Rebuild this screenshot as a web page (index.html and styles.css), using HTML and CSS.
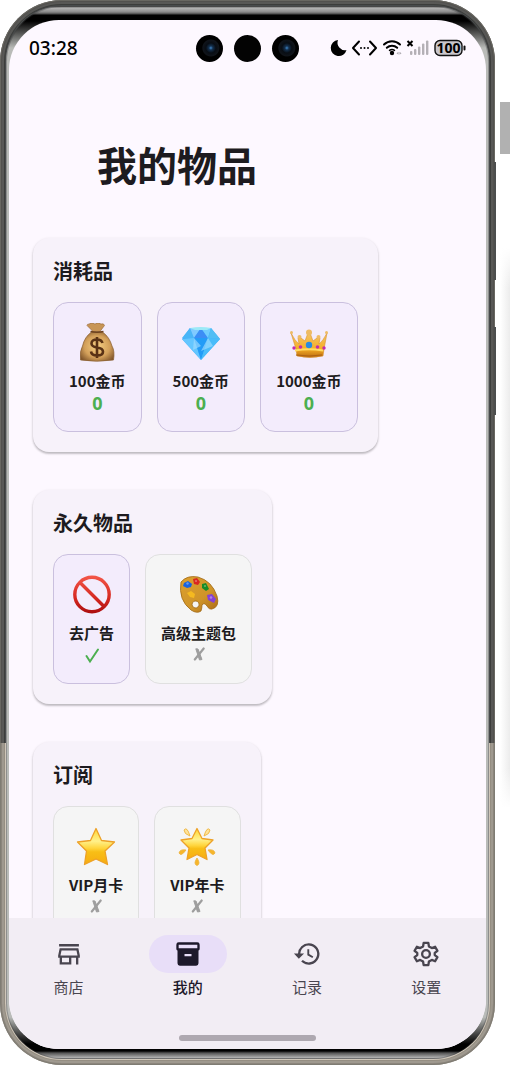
FILE: index.html
```html
<!DOCTYPE html>
<html lang="zh-CN">
<head>
<meta charset="utf-8">
<meta name="viewport" content="width=device-width, initial-scale=1">
<title>我的物品</title>
<link rel="stylesheet" href="styles.css">
</head>
<body>
<div class="stage">
  <div class="phone">
    <span class="key key-power"></span>
    <span class="key key-volume"></span>
    <div class="bezel">
      <div class="screen">
        <header class="status">
          <time class="clock">03:28</time>
          <div class="cameras">
            <span class="camera lens"></span><span class="camera"></span><span class="camera lens"></span>
          </div>
          <svg class="indicators" viewBox="0 0 136 20" aria-hidden="true">
            <path d="M8 2A8 8 0 1 0 16.500 12A7.500 7.500 0 0 1 8 2Z" fill="#000"/>
            <g fill="none" stroke="#000" stroke-width="2" stroke-linecap="round" stroke-linejoin="round"><path d="M29 3.500l-6 6.500 6 6.500M40 3.500l6 6.500-6 6.500"/></g>
            <g fill="#000"><circle cx="31" cy="10" r="1"/><circle cx="34.500" cy="10" r="1"/><circle cx="38" cy="10" r="1"/><circle cx="62" cy="15" r="2.200"/></g>
            <g fill="none" stroke="#000" stroke-width="2" stroke-linecap="round"><path d="M54 6.500a11.500 11.500 0 0 1 16 0M56.800 9.800a7.500 7.500 0 0 1 10.400 0"/><path d="M59.500 12.400a4 4 0 0 1 5 0" stroke-width="1.500"/></g>
            <path d="M66.500 15.300l2-1.500v3zM71.500 15.300l-2-1.500v3z" fill="#aaa6ac"/>
            <path d="M77.500 3l5 5M82.500 3l-5 5" stroke="#000" stroke-width="2"/>
            <g fill="#b4b0b6"><rect x="80" y="13" width="2.400" height="4" rx="1"/><rect x="84" y="11" width="2.400" height="6" rx="1"/><rect x="88" y="8.500" width="2.400" height="8.500" rx="1"/><rect x="92" y="5.500" width="2.400" height="11.500" rx="1"/><rect x="96" y="2.500" width="2.400" height="14.500" rx="1"/></g>
            <rect x="105" y="2.500" width="27" height="15" rx="5" fill="#c9c6cb" stroke="#111" stroke-width="1.400"/>
            <rect x="133.500" y="7.500" width="2" height="5" rx="1" fill="#111"/>
            <text x="118.500" y="15" text-anchor="middle" class="battery-text">100</text>
          </svg>
        </header>

        <main class="content">
          <h1 class="title">我的物品</h1>

          <section class="card">
            <h2 class="card-title">消耗品</h2>
            <ul class="items">
              <li class="item owned">
                <svg class="art" viewBox="0 0 40 40" aria-hidden="true">
                  <defs><radialGradient id="bag" cx=".5" cy=".5" r=".62"><stop offset="0" stop-color="#f6cf84"/><stop offset=".6" stop-color="#d3a05a"/><stop offset="1" stop-color="#80552a"/></radialGradient></defs>
                  <path d="M12 1q3-2 6 0 3-2.500 6 0 3-1 3.500 1.500l-4.500 6h-7q-3-3-6-6 0-1.500 2-1.500z" fill="#c89555" stroke="#946637" stroke-width=".6"/>
                  <path d="M14.500 9h11q7 5 9.500 14 3 5 1.500 14-17 2.500-33 0-1-9 2-14 2-9 9-14z" fill="url(#bag)" stroke="#8b6032" stroke-width=".7"/>
                  <path d="M13.500 8.500q6.500 1.600 13 0" stroke="#6d421e" stroke-width="1.500" fill="none"/>
                  <path d="M25.500 20q-1-3.500-5.500-3.500-5.500 0-5.500 4 0 3 5.500 4 6 .8 6 4.200 0 3.800-6 3.800-5.500 0-6-4M20 14v21" fill="none" stroke="#593215" stroke-width="2.600"/>
                </svg>
                <span class="name">100金币</span><strong class="count">0</strong>
              </li>
              <li class="item owned">
                <svg class="art" viewBox="0 0 40 40" aria-hidden="true">
                  <path d="M9 5h21l9 11-19 21L1 16z" fill="#42aefa"/>
                  <path d="M9 5l4 10H1z" fill="#49b5f7"/><path d="M9 5h11l-7 10z" fill="#80caff"/><path d="M20 5l7 10H13z" fill="#3c8df5"/><path d="M20 5h10l-3 10z" fill="#70cdff"/><path d="M30 5l9 11-12-1z" fill="#51bdf4"/>
                  <path d="M1 16l12-1 7 22z" fill="#64c6ff"/><path d="M13 15h14l-7 22z" fill="#239cf7"/><path d="M27 15l12 1-19 21z" fill="#49bcfa"/>
                  <path d="M13 15l7 8-8 4zM27 15l5 8-12 5z" fill="#9fdcff" opacity=".65"/><path d="M9 5q11-2 21 0l-4 2H14z" fill="#9ce9f7"/>
                </svg>
                <span class="name">500金币</span><strong class="count">0</strong>
              </li>
              <li class="item owned">
                <svg class="art" viewBox="0 0 40 40" aria-hidden="true">
                  <defs><linearGradient id="gold" x2="0" y2="1"><stop stop-color="#f3c468"/><stop offset=".65" stop-color="#f5ae25"/><stop offset="1" stop-color="#bc6c12"/></linearGradient></defs>
                  <path d="M2 10q4 8 8 11l-1-6h3l4 3 3-8h2l3 8 4-3h3l-1 6q4-3 8-11l-3 16-1 7q-13 3-26 0l-1-7z" fill="url(#gold)" stroke="#d9902b" stroke-width=".6"/>
                  <g fill="#eebb65"><circle cx="20" cy="9.500" r="3"/><circle cx="10.500" cy="14" r="2"/><circle cx="29.500" cy="14" r="2"/><circle cx="2.500" cy="9.500" r="1.500"/><circle cx="37.500" cy="9.500" r="1.500"/></g>
                  <path d="M6 27.500q14-2.500 28 0" stroke="#ffdb64" stroke-width="2" fill="none"/><path d="M7 32q13 2 26 0" stroke="#ae6212" stroke-width="1" fill="none"/>
                  <circle cx="20" cy="22" r="3.200" fill="#278be1"/><g fill="#c32cab"><circle cx="11.500" cy="24" r="1.800"/><circle cx="28.500" cy="24" r="1.800"/><circle cx="5" cy="25" r="1.700"/><circle cx="35" cy="25" r="1.700"/></g>
                </svg>
                <span class="name">1000金币</span><strong class="count">0</strong>
              </li>
            </ul>
          </section>

          <section class="card">
            <h2 class="card-title">永久物品</h2>
            <ul class="items">
              <li class="item owned">
                <svg class="art" viewBox="0 0 40 40" aria-hidden="true">
                  <defs><linearGradient id="ban" gradientUnits="userSpaceOnUse" x1="0" y1="0" x2="0" y2="39"><stop stop-color="#f4584a"/><stop offset=".6" stop-color="#d52820"/><stop offset="1" stop-color="#a90d0f"/></linearGradient></defs>
                  <g fill="none" stroke="url(#ban)" stroke-width="3.400"><circle cx="20" cy="19.500" r="17.200"/><path d="M8 7.500l24 24"/></g>
                </svg>
                <span class="name">去广告</span>
                <svg class="mark yes" viewBox="0 0 22 22" role="img" aria-label="已拥有"><path d="M5.500 12l3.500 5.500L17 5.500" fill="none" stroke="currentColor" stroke-width="2" stroke-linecap="round"/></svg>
              </li>
              <li class="item">
                <svg class="art" viewBox="0 0 40 40" aria-hidden="true">
                  <defs><linearGradient id="wood" x2="1" y2="1"><stop stop-color="#dda02e"/><stop offset=".6" stop-color="#cf9429"/><stop offset="1" stop-color="#aa6915"/></linearGradient></defs>
                  <path fill-rule="evenodd" d="M2 7Q8 0 19 2q14 4 19 19 3 11-5 13-3 1-5-3-3-4-5-1 0 3-1 6-4 3-10-1Q-1 25 2 7zm14 19a3.500 3.500 0 1 0 3 6 3.500 3.500 0 0 0-3-6z" fill="url(#wood)" stroke="#9f6713" stroke-width=".8"/>
                  <path d="M5 8l4-2 4 3-1 3-4 1-4-2z" fill="#1763e0"/><path d="M14 4l4-1 3 4-2 3-4-1z" fill="#d92820"/><path d="M23 9l4-1 3 6-3 2-4-3z" fill="#178c27"/><path d="M8 18l4-2 4 3-1 4-4-1z" fill="#f4b920"/><path d="M28 20l5-1 4 5-2 4-6-3z" fill="#8541d5"/>
                  <g fill="#fff" opacity=".35"><circle cx="8.500" cy="8.500" r="1.200"/><circle cx="17" cy="6" r="1"/><circle cx="26" cy="11" r="1"/><circle cx="32" cy="22.500" r="1.300"/></g>
                </svg>
                <span class="name">高级主题包</span>
                <svg class="mark no" viewBox="0 0 22 22" role="img" aria-label="未拥有"><path d="M15.700 4.500L6.800 15.500" fill="none" stroke="currentColor" stroke-width="2.200" stroke-linecap="round"/><path d="M7.800 4.800l2.200.2 4 10.500-2.500.5z" fill="currentColor" stroke="currentColor" stroke-linejoin="round"/></svg>
              </li>
            </ul>
          </section>

          <section class="card">
            <h2 class="card-title">订阅</h2>
            <ul class="items">
              <li class="item">
                <svg class="art" viewBox="0 0 40 40" aria-hidden="true">
                  <defs><linearGradient id="star" x2="0" y2="1"><stop stop-color="#ffd62e"/><stop offset=".35" stop-color="#fff18b"/><stop offset=".55" stop-color="#ffd53c"/><stop offset=".65" stop-color="#f8be16"/><stop offset="1" stop-color="#f7ac10"/></linearGradient></defs>
                  <path d="M20 1.500l5.500 12 13 1.500-9.500 9 2.500 13.500L20 32 8.500 37.500l2-13.500L1.500 15l13-1.500z" fill="url(#star)" stroke="#eda127" stroke-width="1.300" stroke-linejoin="round"/>
                </svg>
                <span class="name">VIP月卡</span>
                <svg class="mark no" viewBox="0 0 22 22" role="img" aria-label="未拥有"><path d="M15.700 4.500L6.800 15.500" fill="none" stroke="currentColor" stroke-width="2.200" stroke-linecap="round"/><path d="M7.800 4.800l2.200.2 4 10.500-2.500.5z" fill="currentColor" stroke="currentColor" stroke-linejoin="round"/></svg>
              </li>
              <li class="item">
                <svg class="art" viewBox="0 0 40 40" aria-hidden="true">
                  <path d="M20 1.500l5 10 11 1.500-8 8 2 11.500-10-5-10 5 2-11.500L4 13l11-1.500z" fill="url(#star)" stroke="#eda127" stroke-width="1.300" stroke-linejoin="round"/>
                  <g stroke="#edb443" stroke-width=".9"><path d="M13 9Q7 7 7 3q3-4 6 6zM27 9q6-2 6-6-3-4-6 6z" fill="#ffe398"/><path d="M9 23q-6-1-7 3 2 4 7-3zM31 23q6-1 7 3-2 4-7-3zM20 31q-4 6 0 7.500 4-1.500 0-7.500z" fill="#f7b629"/></g>
                </svg>
                <span class="name">VIP年卡</span>
                <svg class="mark no" viewBox="0 0 22 22" role="img" aria-label="未拥有"><path d="M15.700 4.500L6.800 15.500" fill="none" stroke="currentColor" stroke-width="2.200" stroke-linecap="round"/><path d="M7.800 4.800l2.200.2 4 10.500-2.500.5z" fill="currentColor" stroke="currentColor" stroke-linejoin="round"/></svg>
              </li>
            </ul>
          </section>
        </main>

        <footer class="dock">
          <nav class="tabs">
            <button class="tab" type="button"><span class="pill"><svg class="tab-icon" viewBox="0 0 24 24" aria-hidden="true"><path d="M3.500 3.500h17v2h-17zM4 7h16l1.300 6.200v2H20V21h-2v-5.800h-4V21H4v-5.800H2.700v-2zM5.600 9l-.9 4.200h14.600L18.400 9zM6 15.200V19h6v-3.800z" fill="currentColor" fill-rule="evenodd"/></svg></span>商店</button>
            <button class="tab active" type="button" aria-current="page"><span class="pill"><svg class="tab-icon" viewBox="0 0 24 24" aria-hidden="true"><path d="M4 2h16a2 2 0 0 1 2 2v3.500q0 1.200-1 1.500v11a2 2 0 0 1-2 2H5a2 2 0 0 1-2-2V9Q2 8.700 2 7.500V4a2 2 0 0 1 2-2zm0 2v3h16V4zm5 8v2h6v-2z" fill="currentColor" fill-rule="evenodd"/></svg></span>我的</button>
            <button class="tab" type="button"><span class="pill"><svg class="tab-icon" viewBox="0 0 24 24" aria-hidden="true"><path d="M13.500 2.800a9.200 9.200 0 0 0-9.200 8.700H.8L5 16l4.500-4.500H6.300A7.200 7.200 0 1 1 8.400 17.100L7 18.500A9.200 9.200 0 1 0 13.500 2.800zM12.300 8v5l4.300 2.500.8-1.300-3.500-2.100V8z" fill="currentColor"/></svg></span>记录</button>
            <button class="tab" type="button"><span class="pill"><svg class="tab-icon" viewBox="0 0 24 24" aria-hidden="true"><path d="M10 2.500h4l.5 3 2.500 1.400 2.800-1.100 2 3.500-2.300 1.800v1.800l2.300 1.800-2 3.500-2.800-1.100-2.500 1.400-.5 3h-4l-.5-3L7 17.100l-2.800 1.100-2-3.500 2.300-1.800v-1.800L2.200 9.300l2-3.500L7 6.900l2.500-1.400z" fill="none" stroke="currentColor" stroke-width="2" stroke-linejoin="round"/><circle cx="12" cy="12" r="3.300" fill="none" stroke="currentColor" stroke-width="2"/></svg></span>设置</button>
          </nav>
          <span class="home-bar"></span>
        </footer>
      </div>
    </div>
  </div>
  <div class="gutter"><span class="thumb"></span><span class="edge-shadow"></span></div>
</div>
</body>
</html>
```
FILE: styles.css
```css
* { box-sizing: border-box; }
body {
  margin: 0;
  background: #fff;
  color: #1d1b20;
  font-family: "Noto Sans CJK SC", sans-serif;
}
h1, h2, ul { margin: 0; padding: 0; }
ul { list-style: none; }

.stage { display: flex; height: 100vh; }

.phone {
  position: relative;
  flex: 1;
  min-width: 0;
  padding: 6px;
  border-radius: 62px;
  background: linear-gradient(#484b4c 0 69.8%, #cfc6b9 69.8%);
  box-shadow: inset 0 0 0 1px rgba(120, 118, 110, .6), inset 0 0 0 2px rgba(60, 55, 50, .2),
    inset 0 0 0 4px rgba(200, 200, 195, .2), inset 0 0 0 5px rgba(40, 36, 30, .35);
}
.key {
  position: absolute;
  right: -1px;
  width: 2px;
  background: #4c4e4e;
}
.key-power { top: 162px; height: 118px; }
.key-volume { top: 327px; height: 88px; }

.bezel {
  height: 100%;
  padding: 14px 3px 10px;
  border-radius: 56px;
  background: linear-gradient(#2b2b2b 0, #b5b5b5 2px, #8a8a8a 6px, #4a4a4a 8px, #000 9px, #000 15px,
    #b9bbb8 42px, #b9bbb8 calc(100% - 42px), #000 calc(100% - 15px), #000 calc(100% - 8px),
    #555 calc(100% - 6px), #b5b5b5 calc(100% - 1px), #666 100%);
  box-shadow: inset 0 0 0 1px rgba(60, 60, 60, .35);
}
.screen {
  display: flex;
  flex-direction: column;
  height: 100%;
  overflow: hidden;
  border-radius: 50px;
  background: #fdf8ff;
}

.status {
  display: grid;
  grid-template-columns: 1fr auto 1fr;
  align-items: center;
  flex: none;
  height: 56px;
  padding: 0 20px;
}
.clock { color: #000; font: 500 19px/24px "Noto Sans", sans-serif; }
.cameras { display: flex; gap: 11px; }
.camera { width: 27px; height: 27px; border-radius: 50%; background: #030303; }
.lens { background: radial-gradient(circle at 55% 48%, #3f86c8 0, #14304e 2px, #080d14 5px, #10141a 8px, #000 9px); }
.indicators { justify-self: end; width: 136px; height: 20px; }
.battery-text { font: 700 14px "Noto Sans", sans-serif; }

.content {
  display: flex;
  flex-direction: column;
  align-items: flex-start;
  flex: 1;
  gap: 38px;
  min-height: 0;
  padding: 59px 24px 24px;
  overflow-y: auto;
  scrollbar-width: none;
}
.title { margin-bottom: 7px; padding-left: 64px; font-size: 40px; font-weight: 700; line-height: 58px; }

.card {
  flex: none;
  padding: 20px;
  border-radius: 16px;
  background: #f7f2fa;
  box-shadow: 0 1px 3px rgba(0, 0, 0, .15), 0 2px 2px rgba(0, 0, 0, .16);
}
.card-title { margin-bottom: 18px; font-size: 20px; font-weight: 700; line-height: 26px; }
.items { display: flex; gap: 15px; }
.item {
  display: flex;
  flex-direction: column;
  align-items: center;
  padding: 20px 15px 17px;
  border: 1px solid #e0e0e0;
  border-radius: 15px;
  background: #f5f5f5;
}
.item.owned { border-color: #cac0de; background: #f3ecfc; }
.art { width: 40px; height: 40px; margin-bottom: 8px; }
.name { margin-bottom: 1px; font-size: 15px; font-weight: 700; line-height: 20px; }
.count { color: #4caf50; font: 700 18px/22px "Noto Sans", sans-serif; }
.mark { width: 22px; height: 22px; }
.yes { color: #4caf50; }
.no { color: #9e9e9e; }

.dock {
  display: flex;
  flex-direction: column;
  align-items: center;
  flex: none;
  padding: 17px 0 8px;
  background: #f2edf4;
}
.tabs { display: flex; width: 100%; margin-bottom: 37px; }
.tab {
  display: flex;
  flex: 1;
  flex-direction: column;
  align-items: center;
  gap: 3px;
  padding: 0;
  border: 0;
  background: none;
  color: #49454f;
  font: 400 15px/22px "Noto Sans CJK SC", sans-serif;
}
.pill { display: grid; place-items: center; width: 78px; height: 38px; border-radius: 20px; }
.tab-icon { width: 28px; height: 28px; }
.active { color: #1d192b; font-weight: 500; }
.active .pill { background: #e8def8; }
.home-bar { width: 137px; height: 6px; border-radius: 3px; background: #aea8b0; }

.gutter { display: flex; flex-direction: column; align-items: flex-end; flex: none; width: 15px; padding-top: 102px; }
.thumb { width: 10px; height: 52px; background: #b1b1b1; }
.edge-shadow {
  width: 10px;
  height: 560px;
  margin-top: 94px;
  background: linear-gradient(#fff, transparent 40px calc(100% - 40px), #fff), linear-gradient(to right, #fff, #ececec);
}
```
